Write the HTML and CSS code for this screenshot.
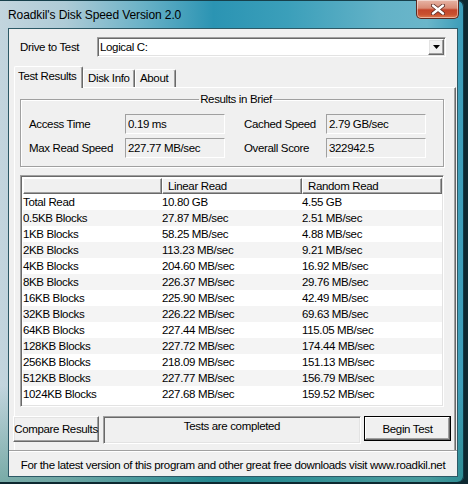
FILE: index.html
```html
<!DOCTYPE html>
<html>
<head>
<meta charset="utf-8">
<title>Roadkil's Disk Speed Version 2.0</title>
<link rel="stylesheet" href="styles.css">
</head>
<body>
<div class="window">
  <div class="titlebar">
    <span class="title">Roadkil's Disk Speed Version 2.0</span>
    <div class="close">
      <svg width="14" height="11" viewBox="0 0 14 11">
        <path d="M2 1.5 L12 9.5 M12 1.5 L2 9.5" stroke="#5a2a22" stroke-width="4" stroke-linecap="round"/>
        <path d="M2 1.5 L12 9.5 M12 1.5 L2 9.5" stroke="#ffffff" stroke-width="2.4" stroke-linecap="round"/>
      </svg>
    </div>
  </div>
  <div class="client">
    <div class="drive-row">
      <span class="drive-label">Drive to Test</span>
      <div class="combo sunken">
        <span class="combo-text">Logical C:</span>
        <div class="combo-btn raised">
          <svg width="7" height="4" viewBox="0 0 7 4"><path d="M0 0 H7 L3.5 4 Z" fill="#000"/></svg>
        </div>
      </div>
    </div>
    <div class="tabs">
      <div class="tab active">Test Results</div>
      <div class="tab">Disk Info</div>
      <div class="tab">About</div>
    </div>
    <div class="panel">
      <fieldset class="group">
        <legend class="group-title">Results in Brief</legend>
        <div class="brief">
          <span class="brief-label">Access Time</span>
          <div class="field">0.19 ms</div>
          <span class="brief-label">Cached Speed</span>
          <div class="field">2.79 GB/sec</div>
          <span class="brief-label">Max Read Speed</span>
          <div class="field">227.77 MB/sec</div>
          <span class="brief-label">Overall Score</span>
          <div class="field">322942.5</div>
        </div>
      </fieldset>
      <div class="listview sunken">
        <div class="lv-grid">
          <div class="hd"></div><div class="hd">Linear Read</div><div class="hd">Random Read</div>
          <div class="row"><span>Total Read</span><span>10.80 GB</span><span>4.55 GB</span></div>
          <div class="row"><span>0.5KB Blocks</span><span>27.87 MB/sec</span><span>2.51 MB/sec</span></div>
          <div class="row"><span>1KB Blocks</span><span>58.25 MB/sec</span><span>4.88 MB/sec</span></div>
          <div class="row"><span>2KB Blocks</span><span>113.23 MB/sec</span><span>9.21 MB/sec</span></div>
          <div class="row"><span>4KB Blocks</span><span>204.60 MB/sec</span><span>16.92 MB/sec</span></div>
          <div class="row"><span>8KB Blocks</span><span>226.37 MB/sec</span><span>29.76 MB/sec</span></div>
          <div class="row"><span>16KB Blocks</span><span>225.90 MB/sec</span><span>42.49 MB/sec</span></div>
          <div class="row"><span>32KB Blocks</span><span>226.22 MB/sec</span><span>69.63 MB/sec</span></div>
          <div class="row"><span>64KB Blocks</span><span>227.44 MB/sec</span><span>115.05 MB/sec</span></div>
          <div class="row"><span>128KB Blocks</span><span>227.72 MB/sec</span><span>174.44 MB/sec</span></div>
          <div class="row"><span>256KB Blocks</span><span>218.09 MB/sec</span><span>151.13 MB/sec</span></div>
          <div class="row"><span>512KB Blocks</span><span>227.77 MB/sec</span><span>156.79 MB/sec</span></div>
          <div class="row"><span>1024KB Blocks</span><span>227.68 MB/sec</span><span>159.52 MB/sec</span></div>
        </div>
      </div>
      <div class="actions">
        <div class="btn raised btn-compare">Compare Results</div>
        <div class="status-box sunken">Tests are completed</div>
        <div class="btn raised btn-begin">Begin Test</div>
      </div>
    </div>
    <div class="statusbar">For the latest version of this program and other great free downloads visit www.roadkil.net</div>
  </div>
</div>
</body>
</html>
```

FILE: styles.css
```css
html, body {
  margin: 0;
  padding: 0;
}
body {
  width: 468px;
  height: 484px;
  background: #0d2830;
  overflow: hidden;
  font-family: "Liberation Sans", Arial, sans-serif;
  font-size: 11.5px;
  letter-spacing: -0.35px;
  color: #000;
}
.window {
  width: 464px;
  height: 482px;
  display: flex;
  flex-direction: column;
  border-radius: 0 7px 6px 0;
  overflow: hidden;
  background:
    linear-gradient(to bottom, rgba(0,0,0,0) 80%, rgba(30,120,100,0.45) 100%),
    linear-gradient(to right, #c3d5de 0%, #aecbd6 14%, #6db3c8 30%, #2b94b3 46%, #3b9fba 62%, #63b2c7 82%, #6ab6ca 92%, #3a9cb8 100%);
  box-shadow: inset 0 1px 0 #17404b, inset -1px 0 0 #0f3a46;
}
.titlebar {
  height: 28px;
  flex: none;
  display: flex;
  align-items: flex-start;
  justify-content: space-between;
}
.title {
  font-size: 12px;
  letter-spacing: -0.1px;
  padding: 8px 0 0 8px;
  line-height: 14px;
}
.close {
  width: 41px;
  height: 18px;
  margin-right: 5px;
  border: 1px solid #5d2a20;
  border-top: none;
  border-radius: 0 0 5px 5px;
  background: linear-gradient(to bottom, #e7b5a6 0%, #d98c76 45%, #c4452a 55%, #c9502f 80%, #de7a4e 100%);
  box-shadow: inset 0 0 0 1px rgba(255,255,255,0.45);
  display: flex;
  align-items: center;
  justify-content: center;
}
.client {
  flex: none;
  margin-left: 8px;
  width: 448px;
  height: 447px;
  border: 1px solid #2d5966;
  background: #f0f0f0;
  display: flex;
  flex-direction: column;
}
.sunken {
  border: 1px solid;
  border-color: #a0a0a0 #ffffff #ffffff #a0a0a0;
  box-shadow: inset 1px 1px 0 #696969, inset -1px -1px 0 #e3e3e3;
}
.raised {
  border: 1px solid;
  border-color: #ffffff #696969 #696969 #ffffff;
  box-shadow: inset -1px -1px 0 #a0a0a0, inset 1px 1px 0 #e3e3e3;
}
.drive-row {
  display: flex;
  align-items: center;
  padding: 8px 0 0 11px;
  height: 20px;
}
.drive-label {
  width: 77px;
  line-height: 14px;
}
.combo {
  box-sizing: border-box;
  width: 349px;
  height: 20px;
  background: #ffffff;
  display: flex;
  align-items: center;
  justify-content: space-between;
  padding: 0 1px 0 2px;
}
.combo-text {
  line-height: 14px;
}
.combo-btn {
  box-sizing: border-box;
  width: 16px;
  height: 16px;
  background: #f0f0f0;
  display: flex;
  align-items: center;
  justify-content: center;
}
.tabs {
  margin-top: 9px;
  height: 21px;
  padding-left: 5px;
  display: flex;
  align-items: flex-end;
  position: relative;
  z-index: 1;
}
.tab {
  box-sizing: border-box;
  height: 18px;
  line-height: 15px;
  padding: 1px 0 0 4px;
  white-space: nowrap;
  border-left: 1px solid #ffffff;
  border-top: 1px solid #ffffff;
  border-right: 1px solid #696969;
  box-shadow: inset -1px 0 0 #a0a0a0;
  border-radius: 2px 2px 0 0;
  background: #f0f0f0;
}
.tab:nth-child(2) { width: 52px; }
.tab:nth-child(3) { width: 41px; }
.tab.active {
  width: 69px;
  height: 22px;
  margin-bottom: -1px;
  padding: 2px 0 0 3px;
}
.panel {
  box-sizing: border-box;
  margin-left: 5px;
  width: 442px;
  height: 363px;
  border-top: 1px solid #ffffff;
  border-left: 1px solid #ffffff;
  border-right: 1px solid #696969;
  box-shadow: inset -1px 0 0 #a0a0a0;
  padding: 5px 0 0 5px;
  display: flex;
  flex-direction: column;
}
.group {
  margin: 0;
  width: 424px;
  box-sizing: border-box;
  height: 74px;
  padding: 8px 0 0 8px;
  border: 1px solid #a0a0a0;
  box-shadow: 1px 1px 0 #ffffff, inset 1px 1px 0 #ffffff;
  min-inline-size: 0;
}
.group-title {
  margin: 0 auto;
  padding: 0 1px;
  line-height: 13px;
}
.brief {
  display: grid;
  grid-template-columns: 96px 100px 19px 82px 100px;
  grid-auto-rows: 20px;
  row-gap: 4px;
  align-items: center;
  white-space: nowrap;
}
.brief-label:nth-of-type(2), .brief-label:nth-of-type(4) {
  grid-column: 4;
}
.field {
  box-sizing: border-box;
  height: 20px;
  padding: 2px 0 0 2px;
  line-height: 14px;
  border: 1px solid;
  border-color: #a0a0a0 #ffffff #ffffff #a0a0a0;
  background: #f0f0f0;
}
.listview {
  box-sizing: border-box;
  margin-top: 8px;
  width: 424px;
  height: 232px;
  background: #ffffff;
  padding: 2px 1px 0 2px;
}
.lv-grid {
  display: grid;
  grid-template-columns: 139px 140px 140px;
  grid-auto-rows: 16px;
}
.hd {
  box-sizing: border-box;
  height: 16px;
  background: #f0f0f0;
  border-top: 1px solid #ffffff;
  border-left: 1px solid #ffffff;
  border-right: 1px solid #696969;
  border-bottom: 1px solid #696969;
  box-shadow: inset -1px -1px 0 #a0a0a0;
  padding-left: 5px;
  line-height: 14px;
}
.row {
  display: contents;
}
.row span {
  line-height: 16px;
  white-space: nowrap;
}
.row:nth-child(2n+5) span {
  background: #f4f4f4;
}
.actions {
  margin-top: 9px;
  display: flex;
  align-items: flex-start;
  margin-left: -7px;
}
.btn {
  box-sizing: border-box;
  background: #f0f0f0;
  display: flex;
  align-items: center;
  justify-content: center;
  line-height: 14px;
  white-space: nowrap;
}
.btn-compare {
  width: 86px;
  height: 26px;
}
.status-box {
  box-sizing: border-box;
  margin-left: 4px;
  width: 258px;
  height: 28px;
  text-align: center;
  padding-top: 2px;
  line-height: 14px;
}
.btn-begin {
  margin-left: 3px;
  width: 87px;
  height: 25px;
  border: 1px solid #000;
  box-shadow: inset -1px -1px 0 #696969, inset 1px 1px 0 #ffffff, inset -2px -2px 0 #a0a0a0;
}
.statusbar {
  flex: 1;
  border-top: 1px solid #a0a0a0;
  box-shadow: inset 0 1px 0 #ffffff;
  display: flex;
  align-items: center;
  justify-content: center;
  padding-top: 2px;
  line-height: 14px;
  white-space: nowrap;
}
```
